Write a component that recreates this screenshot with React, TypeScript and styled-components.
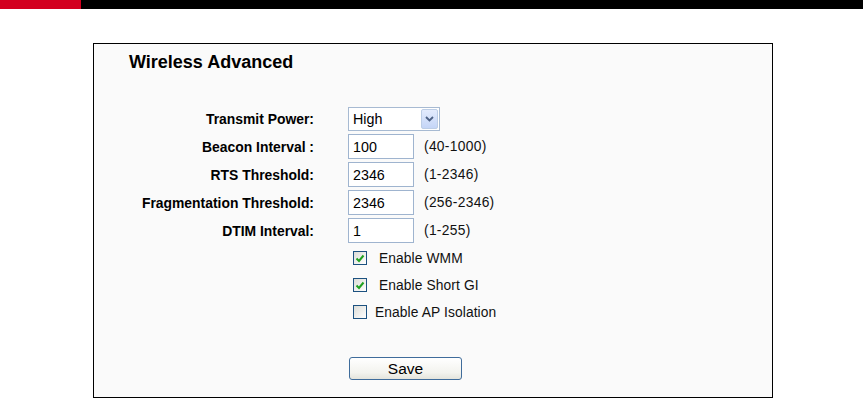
import React from "react";
import styled, { createGlobalStyle } from "styled-components";

const Global = createGlobalStyle`
  html, body { margin: 0; padding: 0; background: #ffffff; }
  body { font-family: "Liberation Sans", Arial, sans-serif; color: #000; }
`;

const TopBar = styled.header`
  display: flex;
  height: 9px;
  background: #000;
`;

const Brand = styled.div`
  width: 81px;
  background: #d3001f;
`;

const Panel = styled.section`
  box-sizing: border-box;
  margin: 34px 0 0 93px;
  width: 680px;
  height: 355px;
  border: 1px solid #000;
  background: #fafafa;
  padding-top: 8px;
`;

const Title = styled.h1`
  margin: 0 0 0 35px;
  font: bold 18px/20px "Liberation Sans", Arial, sans-serif;
  color: #000;
`;

const Form = styled.div`
  display: grid;
  grid-template-columns: 220px auto;
  column-gap: 34px;
  row-gap: 3px;
  margin-top: 35px;
`;

const Label = styled.label`
  grid-column: 1;
  align-self: center;
  text-align: right;
  font: bold 13.9px "Liberation Sans", Arial, sans-serif;
  color: #000;
  white-space: nowrap;
`;

const Field = styled.div`
  grid-column: 2;
  display: flex;
  align-items: center;
  gap: 10px;
`;

const SelectBox = styled.div`
  box-sizing: border-box;
  display: flex;
  align-items: center;
  justify-content: space-between;
  width: 92px;
  height: 24px;
  border: 1px solid #a7bad2;
  background: #fff;
  padding: 1px 1px 1px 4px;
  font: 14.3px "Liberation Sans", Arial, sans-serif;
  color: #000;
`;

const DropButton = styled.span`
  box-sizing: border-box;
  display: flex;
  align-items: center;
  justify-content: center;
  width: 17px;
  height: 20px;
  border: 1px solid #bccde6;
  border-radius: 2px;
  background: linear-gradient(#e3ebfd, #c4d5f7);
`;

const TextInput = styled.input`
  box-sizing: border-box;
  width: 66px;
  height: 25px;
  margin: 0;
  border: 1px solid #9fb4cf;
  background: #fff;
  padding: 0 4px;
  font: 14.3px "Liberation Sans", Arial, sans-serif;
  color: #000;
  outline: none;
`;

const Range = styled.span`
  font: 13.8px "Liberation Sans", Arial, sans-serif;
  color: #111;
  letter-spacing: 0.3px;
`;

const CheckRow = styled.div<{ $gap: number }>`
  grid-column: 2;
  display: flex;
  align-items: center;
  height: 24px;
  gap: ${(p) => p.$gap}px;
  padding-left: 5px;
  font: 13.8px "Liberation Sans", Arial, sans-serif;
  color: #111;
  letter-spacing: 0.1px;
`;

const Box = styled.span`
  box-sizing: border-box;
  display: flex;
  align-items: center;
  justify-content: center;
  width: 14px;
  height: 14px;
  border: 1px solid #1c5180;
  background: linear-gradient(135deg, #dcdcd7, #ffffff);
`;

const SaveButton = styled.button`
  grid-column: 2;
  justify-self: start;
  box-sizing: border-box;
  width: 113px;
  height: 23px;
  margin: 30px 0 0 1px;
  border: 1px solid #3f6c9b;
  border-radius: 3px;
  background: linear-gradient(#ffffff, #f3f3ee 70%, #e4e4dc);
  font: 15.5px "Liberation Sans", Arial, sans-serif;
  color: #000;
  padding: 0;
`;

const Chevron = () => (
  <svg width="9" height="6" viewBox="0 0 9 6">
    <path d="M1 1 L4.5 4.5 L8 1" fill="none" stroke="#4d6185" strokeWidth="1.8" />
  </svg>
);

const Check = () => (
  <svg width="10" height="9" viewBox="0 0 10 9">
    <path d="M1.5 4.5 L4 7 L8.5 1.5" fill="none" stroke="#21a121" strokeWidth="2" />
  </svg>
);

const rows = [
  { label: "Beacon Interval :", value: "100", range: "(40-1000)" },
  { label: "RTS Threshold:", value: "2346", range: "(1-2346)" },
  { label: "Fragmentation Threshold:", value: "2346", range: "(256-2346)" },
  { label: "DTIM Interval:", value: "1", range: "(1-255)" },
];

const checks = [
  { label: "Enable WMM", checked: true },
  { label: "Enable Short GI", checked: true },
  { label: "Enable AP Isolation", checked: false },
];

export default function App() {
  return (
    <>
      <Global />
      <TopBar>
        <Brand />
      </TopBar>
      <Panel>
        <Title>Wireless Advanced</Title>
        <Form>
          <Label>Transmit Power:</Label>
          <Field>
            <SelectBox>
              <span>High</span>
              <DropButton>
                <Chevron />
              </DropButton>
            </SelectBox>
          </Field>
          {rows.map((r) => (
            <React.Fragment key={r.label}>
              <Label>{r.label}</Label>
              <Field>
                <TextInput defaultValue={r.value} />
                <Range>{r.range}</Range>
              </Field>
            </React.Fragment>
          ))}
          {checks.map((c) => (
            <CheckRow key={c.label} $gap={c.checked ? 12 : 8}>
              <Box>{c.checked && <Check />}</Box>
              <span>{c.label}</span>
            </CheckRow>
          ))}
          <SaveButton>Save</SaveButton>
        </Form>
      </Panel>
    </>
  );
}
